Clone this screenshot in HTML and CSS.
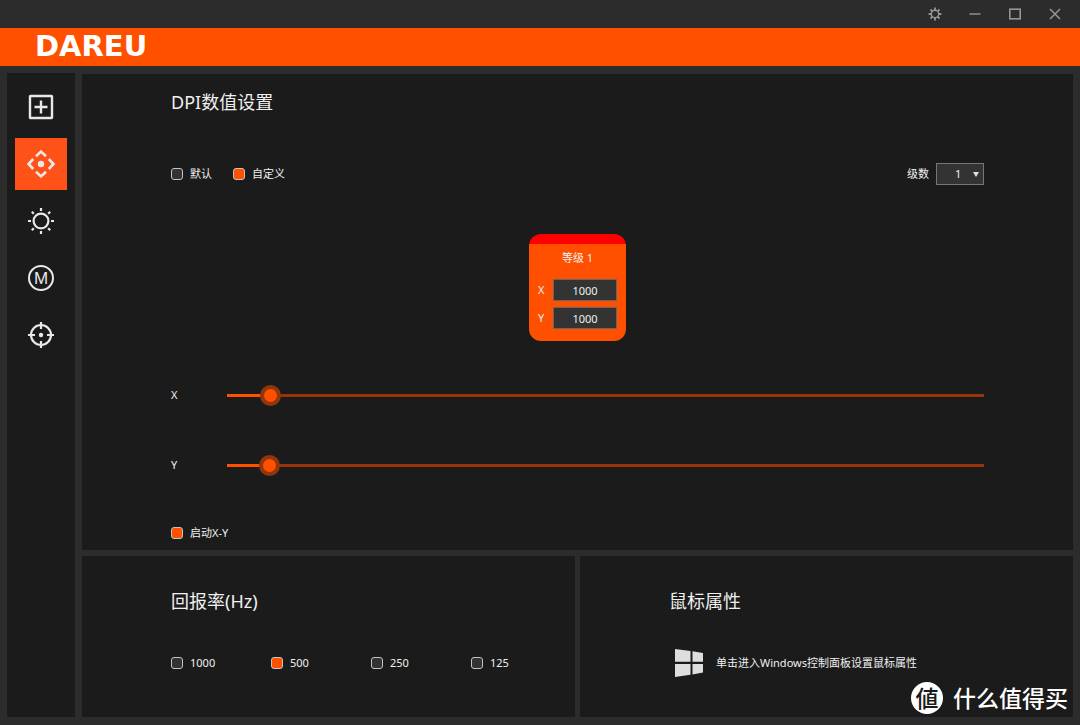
FILE: index.html
```html
<!DOCTYPE html>
<html lang="zh-CN">
<head>
<meta charset="utf-8">
<meta name="viewport" content="width=device-width, initial-scale=1">
<title>DAREU</title>
<link rel="stylesheet" href="styles.css">
</head>
<body>
<div class="titlebar">
  <button class="win-btn" type="button" aria-label="设置">
    <svg width="14" height="14" viewBox="0 0 14 14" fill="none" stroke="currentColor"><circle cx="7" cy="7" r="3.7" stroke-width="1.4"/><path d="M7 .6v2.6M7 10.8v2.6M.6 7h2.6M10.8 7h2.6M2.5 2.5l1.8 1.8M9.7 9.7l1.8 1.8M2.5 11.5l1.8-1.8M9.7 4.3l1.8-1.8" stroke-width="1.8"/></svg>
  </button>
  <button class="win-btn" type="button" aria-label="最小化">
    <svg width="12" height="12" viewBox="0 0 12 12" fill="none" stroke="currentColor"><path d="M.5 6h11" stroke-width="1.4"/></svg>
  </button>
  <button class="win-btn" type="button" aria-label="最大化">
    <svg width="12" height="12" viewBox="0 0 12 12" fill="none" stroke="currentColor"><rect x=".8" y="1.2" width="10.4" height="9.6" stroke-width="1.6"/></svg>
  </button>
  <button class="win-btn" type="button" aria-label="关闭">
    <svg width="12" height="12" viewBox="0 0 12 12" fill="none" stroke="currentColor"><path d="M1 1l10 10M11 1L1 11" stroke-width="1.5"/></svg>
  </button>
</div>
<header class="brand">DAREU</header>
<div class="workspace">
  <nav class="sidebar">
    <button class="nav-btn" type="button" aria-label="按键">
      <svg width="26" height="26" viewBox="0 0 26 26" fill="none" stroke="currentColor"><rect x="2" y="2" width="22" height="22" rx=".5" stroke-width="2.4"/><path d="M13 6.5v13M6.500 13h13" stroke-width="2.4"/></svg>
    </button>
    <button class="nav-btn nav-btn-active" type="button" aria-label="DPI">
      <svg width="28" height="28" viewBox="0 0 28 28" fill="none" stroke="currentColor" stroke-width="2.6"><circle cx="14" cy="14" r="3.200" fill="currentColor" stroke="none"/><path d="M9 6.200l5-4.600 5 4.600M9 21.800l5 4.600 5-4.600M6.200 9L1.600 14l4.600 5M21.800 9l4.600 5-4.600 5"/></svg>
    </button>
    <button class="nav-btn" type="button" aria-label="灯光">
      <svg width="28" height="28" viewBox="0 0 28 28" fill="none" stroke="currentColor" stroke-width="2.2"><circle cx="14" cy="14" r="7.400"/><path d="M14 1v3M14 24v3M1 14h3M24 14h3M4.800 4.800l2 2M21.200 21.200l2 2M4.800 23.200l2-2M21.200 6.800l2-2"/></svg>
    </button>
    <button class="nav-btn" type="button" aria-label="宏">
      <svg width="28" height="28" viewBox="0 0 28 28"><circle cx="14" cy="14" r="12" fill="none" stroke="currentColor" stroke-width="2"/><text class="macro-letter" x="14" y="20" text-anchor="middle">M</text></svg>
    </button>
    <button class="nav-btn" type="button" aria-label="校准">
      <svg width="28" height="28" viewBox="0 0 28 28" fill="none" stroke="currentColor" stroke-width="2.200"><circle cx="14" cy="14" r="10"/><circle cx="14" cy="14" r="2.200" fill="currentColor" stroke="none"/><path d="M14 1v7M14 20v7M1 14h7M20 14h7"/></svg>
    </button>
  </nav>
  <main class="content">
    <section class="panel dpi">
      <h1 class="heading">DPI数值设置</h1>
      <div class="mode-row">
        <div class="modes">
          <label class="option"><input class="tick" type="radio" name="mode">默认</label>
          <label class="option"><input class="tick" type="radio" name="mode" checked>自定义</label>
        </div>
        <label class="levels">级数
          <span class="select-wrap"><select class="select"><option>1</option></select></span>
        </label>
      </div>
      <div class="level-card">
        <div class="level-name">等级 1</div>
        <label class="level-field">X<input class="level-input" type="text" value="1000"></label>
        <label class="level-field">Y<input class="level-input" type="text" value="1000"></label>
      </div>
      <div class="sliders">
        <label class="slider-row">X<input class="slider" type="range" min="0" max="1000" value="45"></label>
        <label class="slider-row">Y<input class="slider" type="range" min="0" max="1000" value="43"></label>
      </div>
      <label class="option"><input class="tick" type="checkbox" checked>启动X-Y</label>
    </section>
    <div class="lower">
      <section class="panel lower-panel">
        <h2 class="heading">回报率(Hz)</h2>
        <div class="rates">
          <label class="option"><input class="tick" type="radio" name="rate">1000</label>
          <label class="option"><input class="tick" type="radio" name="rate" checked>500</label>
          <label class="option"><input class="tick" type="radio" name="rate">250</label>
          <label class="option"><input class="tick" type="radio" name="rate">125</label>
        </div>
      </section>
      <section class="panel lower-panel">
        <h2 class="heading">鼠标属性</h2>
        <button class="system-link" type="button">
          <svg width="28" height="28" viewBox="0 0 28 28" fill="#dedede"><path d="M0 0l15.500 2v10.800H0zM17.500 2.300L28 4v8.800H17.500zM0 15h15.500v10.800L0 28zM17.500 15H28v8.500l-10.500 2z"/></svg>
          单击进入Windows控制面板设置鼠标属性
        </button>
      </section>
    </div>
  </main>
</div>
<div class="watermark"><span class="watermark-badge">値</span>什么值得买</div>
</body>
</html>
```

FILE: styles.css
```css
* {
  box-sizing: border-box;
}

body {
  margin: 0;
  min-height: 100vh;
  display: flex;
  flex-direction: column;
  position: relative;
  background: #2c2c2c;
  color: #f0f0f0;
  font: 11px/16px "Noto Sans", "Noto Sans CJK SC", sans-serif;
}

button,
input,
select {
  font: inherit;
  color: inherit;
  margin: 0;
}

button {
  padding: 0;
  border: 0;
  background: none;
}

.titlebar {
  display: flex;
  justify-content: flex-end;
  height: 28px;
  padding-right: 5px;
  color: #969696;
}

.win-btn {
  width: 40px;
  display: grid;
  place-items: center;
}

.brand {
  height: 38px;
  padding-left: 35px;
  background: #ff5000;
  color: #fff;
  font: bold 29px/37px "DejaVu Sans", sans-serif;
}

.workspace {
  flex: 1;
  display: flex;
  gap: 7px;
  padding: 7px 7px 8px;
}

.sidebar {
  width: 68px;
  padding: 8px;
  display: flex;
  flex-direction: column;
  gap: 5px;
  background: #1b1b1b;
}

.nav-btn {
  height: 52px;
  display: grid;
  place-items: center;
  color: #e8e8e8;
}

.nav-btn-active {
  background: #ff5219;
}

.macro-letter {
  font: 17px "Liberation Sans", sans-serif;
  fill: currentColor;
}

.content {
  flex: 1;
  min-width: 0;
  padding-top: 1px;
  display: flex;
  flex-direction: column;
  gap: 6px;
}

.panel {
  background: #1b1b1b;
}

.dpi {
  flex: 1;
  display: flex;
  flex-direction: column;
  padding: 16px 89px 9px;
}

.heading {
  margin: 0;
  font-size: 18px;
  font-weight: 400;
  line-height: 24px;
}

.mode-row {
  display: flex;
  justify-content: space-between;
  align-items: center;
  margin: 49px 0;
}

.modes {
  display: flex;
  gap: 21px;
}

.option {
  display: flex;
  align-items: center;
  gap: 7px;
}

.tick {
  appearance: none;
  width: 12px;
  height: 12px;
  border: 1px solid #c4c4c4;
  border-radius: 3px;
  background: #333;
}

.tick:checked {
  background: #ff5000;
}

.levels {
  display: flex;
  align-items: center;
  gap: 7px;
}

.select-wrap {
  position: relative;
}

.select-wrap::after {
  content: "";
  position: absolute;
  right: 5px;
  top: 9px;
  border: 3px solid transparent;
  border-top: 5px solid #e0e0e0;
  border-bottom: 0;
  pointer-events: none;
}

.select {
  appearance: none;
  display: block;
  width: 48px;
  height: 22px;
  padding: 0 0 0 18px;
  border: 1px solid #777;
  border-radius: 0;
  background: #333;
}

.level-card {
  align-self: center;
  width: 97px;
  padding: 6px 9px 12px;
  border-radius: 12px;
  background: linear-gradient(#f00 10px, #ff5000 10px);
  padding-top: 16px;
}

.level-name {
  margin-bottom: 13px;
  text-align: center;
}

.level-field {
  display: flex;
  align-items: center;
  justify-content: space-between;
}

.level-field + .level-field {
  margin-top: 6px;
}

.level-input {
  width: 64px;
  height: 22px;
  padding: 0;
  border: 1px solid #666;
  background: #333;
  text-align: center;
}

.sliders {
  display: flex;
  flex-direction: column;
  gap: 48px;
  margin: 43px 0 49px;
}

.slider-row {
  display: grid;
  grid-template-columns: 56px 1fr;
  align-items: center;
}

.slider {
  appearance: none;
  width: 100%;
  height: 22px;
  background: linear-gradient(90deg, #ff5000 5%, #973409 5%) center / 100% 3px no-repeat;
}

.slider::-webkit-slider-thumb {
  appearance: none;
  width: 21px;
  height: 21px;
  border: 4px solid #8f360d;
  border-radius: 50%;
  background: #ff5000;
}

.lower {
  display: grid;
  grid-template-columns: 1fr 1fr;
  gap: 5px;
}

.lower-panel {
  padding: 33px 0 38px 89px;
}

.rates {
  display: grid;
  grid-template-columns: repeat(4, 100px);
  align-items: center;
  height: 32px;
  margin-top: 34px;
}

.system-link {
  display: flex;
  align-items: center;
  gap: 13px;
  height: 32px;
  margin-top: 34px;
  padding-left: 6px;
}

.watermark {
  position: absolute;
  right: 12px;
  bottom: 10px;
  display: flex;
  align-items: center;
  gap: 10px;
  color: #fff;
  font-size: 23px;
  font-weight: 500;
  line-height: 34px;
}

.watermark-badge {
  width: 32px;
  height: 32px;
  border-radius: 50%;
  background: #fff;
  color: #1b1b1b;
  line-height: 32px;
  text-align: center;
}
```
